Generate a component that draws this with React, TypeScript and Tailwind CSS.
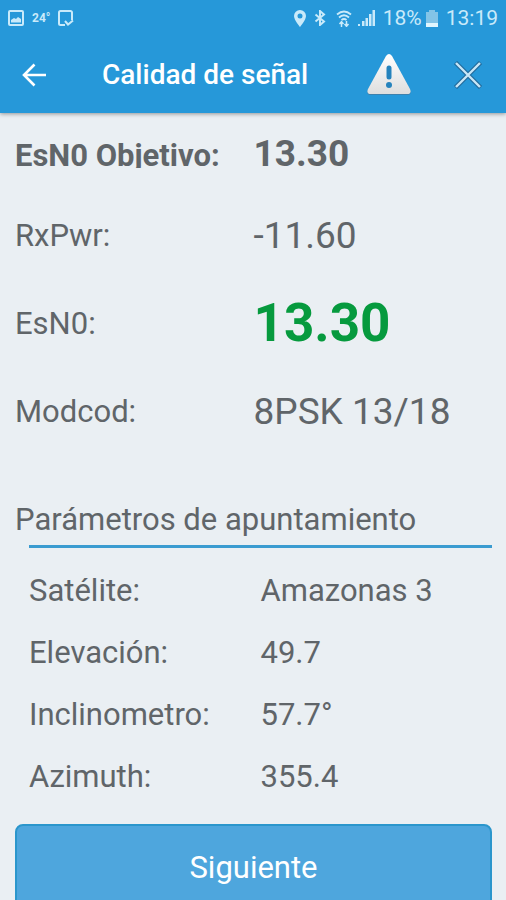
import type { ReactNode } from "react";

const signal = [
  { label: "EsN0 Objetivo:", value: "13.30", row: "h-20", labelStyle: "font-bold h-7 leading-8 overflow-hidden", valueStyle: "text-[37px] font-bold" },
  { label: "RxPwr:", value: "-11.60", row: "h-21", labelStyle: "", valueStyle: "text-[37px]" },
  { label: "EsN0:", value: "13.30", row: "h-23", labelStyle: "", valueStyle: "text-[53px] font-bold text-[#069a3e]" },
  { label: "Modcod:", value: "8PSK 13/18", row: "h-21", labelStyle: "", valueStyle: "text-[37px]" },
];

const pointing = [
  { label: "Satélite:", value: "Amazonas 3" },
  { label: "Elevación:", value: "49.7" },
  { label: "Inclinometro:", value: "57.7°" },
  { label: "Azimuth:", value: "355.4" },
];

function Icon({ className, box, children }: { className: string; box: string; children: ReactNode }) {
  return (
    <svg className={className} viewBox={box} fill="none" aria-hidden="true">
      {children}
    </svg>
  );
}

function StatusBar() {
  return (
    <div className="flex h-9 items-center pl-2 pr-2 text-[#c9eafa]">
      <Icon className="h-4 w-4" box="0 0 16 16">
        <rect x="1" y="1" width="14" height="14" rx="1" stroke="currentColor" strokeWidth="2" />
        <path d="M3 12.500V10l3-2 2 1 2-2 3 2v3.500z" fill="currentColor" />
      </Icon>
      <span className="ml-2 text-[12px] font-bold">24°</span>
      <Icon className="ml-2 h-4 w-4" box="0 0 16 16">
        <path d="M7 15H2.500a1.500 1.500 0 0 1-1.500-1.500v-11A1.500 1.500 0 0 1 2.500 1h10A1.500 1.500 0 0 1 14 2.500V10" stroke="currentColor" strokeWidth="2" />
        <path d="M7 11l3 3.500 5-4" stroke="currentColor" strokeWidth="2" />
      </Icon>
      <div className="ml-auto flex items-center">
        <Icon className="h-[17px] w-3" box="0 0 12 17">
          <path fillRule="evenodd" d="M6 0a6 6 0 0 0-6 6c0 4 6 11 6 11s6-7 6-11a6 6 0 0 0-6-6zm0 3.500a2.500 2.500 0 1 1 0 5 2.500 2.500 0 0 1 0-5z" fill="currentColor" />
        </Icon>
        <Icon className="ml-2 h-4 w-3" box="0 0 12 16">
          <path d="M1.500 4.500l8.500 7L6 15V1l4 3.500-8.500 7" stroke="currentColor" strokeWidth="2" />
        </Icon>
        <Icon className="ml-2.5 h-[17px] w-4" box="0 0 16 17">
          <path d="M1 4.500q7-6 14 0M3 7.500q5-4.500 10 0M5.500 10q2.500-2 5 0" stroke="currentColor" strokeWidth="1.800" />
          <path d="M5.500 17v-5M3.500 14l2-2.300 2 2.300M10.500 11v5M8.500 14l2 2.300 2-2.300" stroke="currentColor" strokeWidth="1.500" />
        </Icon>
        <Icon className="ml-1.5 h-4 w-[17px]" box="0 0 17 16">
          <path d="M0 14h2v2H0zM4 11h2.500v5H4zM7.500 8H10v8H7.500zM11 4h2.500v12H11zM14.500 0H17v16h-2.500z" fill="currentColor" />
        </Icon>
        <span className="ml-2 text-[21px] leading-6">18%</span>
        <Icon className="ml-1 h-[17px] w-3" box="0 0 12 17">
          <path d="M3 0h6v2h3v15H0V2h3z" fill="#83c4e7" />
          <path d="M0 13h12v4H0z" fill="#e0f6ff" />
        </Icon>
        <span className="ml-2 text-[21px] leading-6">13:19</span>
      </div>
    </div>
  );
}

export default function App() {
  return (
    <div className="h-screen overflow-hidden bg-[#eaeff3] font-[Roboto,sans-serif] text-[31px] text-[#606569]">
      <header className="bg-[#2698d9] shadow-[0_1px_4px_#00000060]">
        <StatusBar />
        <div className="flex h-[77px] items-center pl-[22px] pr-6">
          <button type="button" aria-label="Volver">
            <Icon className="h-6 w-6" box="0 0 24 24">
              <path d="M24 12H2M12.500 1.500L2 12l10.500 10.500" stroke="#fff" strokeWidth="2.600" />
            </Icon>
          </button>
          <h1 className="ml-14 flex-1 whitespace-nowrap text-[28px] font-medium text-white">Calidad de señal</h1>
          <button type="button" aria-label="Advertencia" className="mr-[42px]">
            <Icon className="h-[42px] w-[46px]" box="0 0 46 42">
              <defs>
                <linearGradient id="warning" x1="0" y1="0" x2="0" y2="1">
                  <stop stopColor="#fff" />
                  <stop offset="1" stopColor="#dedede" />
                </linearGradient>
              </defs>
              <path d="M20 3q3-4 6 0l18 33q2 5-3 5H5q-5 0-3-5z" fill="#47779b" opacity=".7" />
              <path d="M20 2q3-4 6 0l18 33q2 5-3 5H5q-5 0-3-5z" fill="url(#warning)" />
              <path d="M23 14v9" stroke="#2583bd" strokeWidth="5" strokeLinecap="round" />
              <circle cx="23" cy="31" r="3" fill="#2583bd" />
            </Icon>
          </button>
          <button type="button" aria-label="Cerrar">
            <Icon className="h-7 w-7" box="0 0 28 28">
              <path d="M1.500 1.500l25 25M26.500 1.500l-25 25" stroke="#236b9c" strokeWidth="4.500" />
              <path d="M2 2l24 24M26 2L2 26" stroke="#c9e7f7" strokeWidth="2.400" />
            </Icon>
          </button>
        </div>
      </header>
      <main className="pl-[15px] pr-[14px]">
        <dl className="pt-px">
          {signal.map((item) => (
            <div key={item.label} className={`flex items-center ${item.row}`}>
              <dt className={`w-1/2 whitespace-nowrap ${item.labelStyle}`}>{item.label}</dt>
              <dd className={`whitespace-nowrap ${item.valueStyle}`}>{item.value}</dd>
            </div>
          ))}
        </dl>
        <section className="pt-12">
          <h2 className="h-[43px] leading-[36px]">Parámetros de apuntamiento</h2>
          <dl className="ml-[14px] border-t-3 border-[#3a9bd0] pt-3">
            {pointing.map((item) => (
              <div key={item.label} className="flex h-[62px] items-center">
                <dt className="w-1/2">{item.label}</dt>
                <dd className="whitespace-nowrap">{item.value}</dd>
              </div>
            ))}
          </dl>
        </section>
        <button type="button" className="mt-4 h-[88px] w-full rounded-lg border-2 border-[#2b96cc] bg-[#4ea6dd] text-white">
          Siguiente
        </button>
      </main>
    </div>
  );
}
